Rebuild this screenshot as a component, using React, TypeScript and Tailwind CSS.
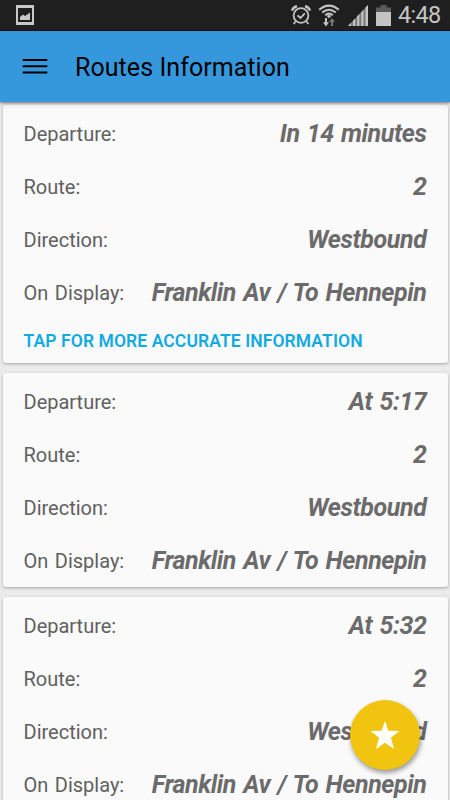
import React from 'react';

type Field = { label: string; value: string };
type Departure = { fields: Field[]; live?: boolean };

const makeFields = (departure: string): Field[] => [
  { label: 'Departure:', value: departure },
  { label: 'Route:', value: '2' },
  { label: 'Direction:', value: 'Westbound' },
  { label: 'On Display:', value: 'Franklin Av / To Hennepin' },
];

const departures: Departure[] = [
  { fields: makeFields('In 14 minutes'), live: true },
  { fields: makeFields('At 5:17') },
  { fields: makeFields('At 5:32') },
];

function StatusBar() {
  return (
    <div className="flex h-[31px] shrink-0 items-center border-b border-[#250d0d] bg-[#1f1f1f] pl-4 pr-[10px]">
      <svg className="h-5 w-[18px]" viewBox="0 0 18 20">
        <path fill="#c8c8c8" fillRule="evenodd" d="M0 0H18V20H0ZM2 3V17H16V3Z" />
        <path fill="#c8c8c8" d="M4 15V12L7 9.5L9 11L14 7.5V15Z" />
      </svg>
      <div className="ml-auto flex items-center">
        <svg className="h-[22px] w-5" viewBox="0 0 20 22" fill="none" stroke="#c4c4c4">
          <circle cx="10" cy="11.5" r="7.4" strokeWidth="1.8" />
          <path strokeWidth="1.8" d="M6.5 11.3L9.5 14L13.8 9.3M4.5 17.5L2.7 20M15.5 17.5L17.3 20" />
          <path strokeWidth="2.4" d="M1 6.5Q2.3 3 6 2.3M19 6.5Q17.7 3 14 2.3" />
        </svg>
        <svg className="ml-[7px] h-[23px] w-[22px]" viewBox="0 0 22 23">
          <path fill="none" stroke="#c4c4c4" strokeWidth="2" d="M1.2 5.7Q11 -2.5 20.8 5.7M4.2 8.6Q11 3 17.8 8.6M7.2 11.2Q11 8 14.8 11.2" />
          <path fill="#c4c4c4" d="M8.7 12Q11 10 13.3 12L11 14.3Z" />
          <path fill="#c4c4c4" d="M7 14H9V18.2H11L8 22.5L5 18.2H7Z" />
          <path fill="#777" d="M13 22V18H11L14 14L17 18H15V22Z" />
        </svg>
        <svg className="ml-[7px] h-[21px] w-[22px]" viewBox="0 0 22 21">
          <path fill="#777" d="M1 21L21 0V21Z" />
          <path fill="#c4c4c4" d="M1 21L4 17.8V21ZM6 21V15.7L8.2 13.4V21ZM10.2 21V11.3L12.3 9.1V21ZM14.3 21V7L16.5 4.7V21ZM18.5 21V2.6L21 0V21Z" />
        </svg>
        <svg className="ml-[7px] h-[21px] w-[15px]" viewBox="0 0 15 21">
          <path fill="#5c5c5c" d="M4.5 0H10.5V2.5H15V7H0V2.5H4.5Z" />
          <path fill="#c4c4c4" d="M0 7H15V21H0Z" />
        </svg>
        <span className="ml-[7px] w-[42px] whitespace-nowrap text-[23.5px] leading-[30px] tracking-[-0.7px] text-[#c4c4c4]">4:48</span>
      </div>
    </div>
  );
}

function Header() {
  return (
    <header className="relative z-10 flex h-[71px] shrink-0 items-center bg-[#3598dc] pl-[22px] shadow-[0_1px_2px_rgba(0,0,0,0.4),0_3px_5px_rgba(0,0,0,0.12)]">
      <svg className="h-[15px] w-[26px]" viewBox="0 0 26 15">
        <path d="M0.7 0H25.3V2H0.7ZM0.7 6.3H25.3V8.3H0.7ZM0.7 12.6H25.3V14.6H0.7Z" />
      </svg>
      <h1 className="ml-[27px] pt-[2px] text-[25px] leading-[30px] tracking-[0.06px] text-black">Routes Information</h1>
    </header>
  );
}

function Card({ departure }: { departure: Departure }) {
  return (
    <section
      className={`shrink-0 rounded-[3px] bg-[#fafafa] px-[21px] pt-[2px] shadow-[0_1px_3px_rgba(0,0,0,0.3)] ${departure.live ? 'h-[258px]' : 'h-[214px]'}`}
    >
      {departure.fields.map((f) => (
        <div key={f.label} className="flex h-[53px] items-center justify-between whitespace-nowrap">
          <span className="text-[20px] leading-[30px] text-[#606060] [word-spacing:1.5px]">{f.label}</span>
          <span className="text-[25px] leading-[30px] font-bold italic tracking-[-0.4px] text-[#6b6b6b] pt-px [word-spacing:1.4px]">{f.value}</span>
        </div>
      ))}
      {departure.live && (
        <div className="flex h-[44px] items-center whitespace-nowrap text-[17.5px] font-semibold tracking-[0.09px] text-[#12aae2]">
          <span>TAP FOR MORE ACCURATE INFORMATION</span>
        </div>
      )}
    </section>
  );
}

export default function App() {
  return (
    <div className="relative flex h-[800px] w-[450px] flex-col overflow-hidden bg-[#ebebeb] font-['Roboto',sans-serif]">
      <StatusBar />
      <Header />
      <main className="flex flex-1 flex-col gap-[10px] overflow-hidden px-[2.5px] pt-[3px]">
        {departures.map((d) => (
          <Card key={d.fields[0].value} departure={d} />
        ))}
      </main>
      <button className="absolute left-[350px] top-[700px] z-20 flex size-[70px] items-center justify-center rounded-full bg-[#f1c40f] shadow-[1px_3px_5px_rgba(0,0,0,0.4)]">
        <svg className="size-[30px]" viewBox="0 0 30 30">
          <path fill="#fff" d="M15 1L18.4 10.8L29.5 11L20.9 17.8L24.1 29L15 22.7L5.9 29L9.1 17.8L0.5 11L11.6 10.8Z" />
        </svg>
      </button>
    </div>
  );
}
